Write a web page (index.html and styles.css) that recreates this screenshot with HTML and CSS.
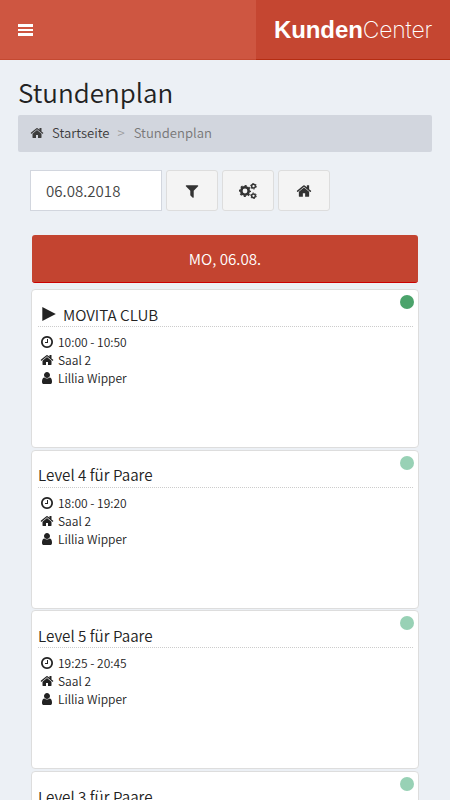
FILE: index.html
```html
<!DOCTYPE html>
<html lang="de">
<head>
<meta charset="utf-8">
<title>Stundenplan</title>
<link rel="stylesheet" href="styles.css">
</head>
<body>
<svg class="sprite" viewBox="0 0 1792 1792">
  <symbol id="home" viewBox="0 0 1792 1792"><path d="M1472 992v480q0 26-19 45t-45 19h-384v-384h-256v384h-384q-26 0-45-19t-19-45v-480q0-1 .5-3t.5-3l575-474 575 474q1 2 1 6zm223-69l-62 74q-8 9-21 11h-3q-13 0-21-7l-692-577-692 577q-12 8-24 7-13-2-21-11l-62-74q-8-10-7-23.500t11-21.500l719-599q32-26 76-26t76 26l244 204v-195q0-14 9-23t23-9h192q14 0 23 9t9 23v408l219 182q10 8 11 21.500t-7 23.500z"/></symbol>
  <symbol id="filter" viewBox="0 0 1792 1792"><path d="M1595 295q17 41-14 70l-493 493v742q0 42-39 59-13 5-25 5-27 0-45-19l-256-256q-19-19-19-45v-486l-493-493q-31-29-14-70 17-39 59-39h1280q42 0 59 39z"/></symbol>
  <symbol id="user" viewBox="0 0 1792 1792"><path d="M1536 1399q0 109-62.500 187t-150.500 78h-854q-88 0-150.500-78t-62.500-187q0-85 8.500-160.500t31.500-152 58.500-131 94-89 134.500-34.500q131 128 313 128t313-128q76 0 134.500 34.500t94 89 58.500 131 31.500 152 8.500 160.500zm-256-887q0 159-112.500 271.500t-271.500 112.500-271.500-112.500-112.500-271.500 112.500-271.500 271.500-112.500 271.500 112.500 112.500 271.500z"/></symbol>
  <symbol id="clock" viewBox="0 0 1792 1792"><path d="M1024 544v448q0 14-9 23t-23 9h-320q-14 0-23-9t-9-23v-64q0-14 9-23t23-9h224v-352q0-14 9-23t23-9h64q14 0 23 9t9 23zm416 352q0-148-73-273t-198-198-273-73-273 73-198 198-73 273 73 273 198 198 273 73 273-73 198-198 73-273zm224 0q0 209-103 385.500t-279.500 279.500-385.500 103-385.500-103-279.500-279.500-103-385.500 103-385.500 279.500-279.500 385.500-103 385.500 103 279.500 279.500 103 385.500z"/></symbol>
  <symbol id="cogs" viewBox="0 0 18 16">
    <g fill="none" stroke="currentColor">
      <circle cx="6" cy="8" r="3.700" stroke-width="2.600"/>
      <circle cx="6" cy="8" r="5.300" stroke-width="1.500" stroke-dasharray="2.081" stroke-dashoffset="1.040"/>
      <circle cx="14.500" cy="3.200" r="1.900" stroke-width="1.500"/>
      <circle cx="14.500" cy="3.200" r="2.850" stroke-width="1" stroke-dasharray="1.492"/>
      <circle cx="14.500" cy="12.800" r="1.900" stroke-width="1.500"/>
      <circle cx="14.500" cy="12.800" r="2.850" stroke-width="1" stroke-dasharray="1.492"/>
    </g>
  </symbol>
</svg>

<header class="topbar">
  <div class="menu"><span class="bars"><i></i><i></i><i></i></span></div>
  <div class="brand"><b>Kunden</b><span>Center</span></div>
</header>

<main class="content">
  <h1>Stundenplan</h1>
  <nav class="crumbs">
    <svg class="icon"><use href="#home"/></svg>
    <span class="crumb-home">Startseite</span>
    <span class="sep">&gt;</span>
    <span class="current">Stundenplan</span>
  </nav>
  <div class="tools">
    <div class="date">06.08.2018</div>
    <div class="btn"><svg class="icon"><use href="#filter"/></svg></div>
    <div class="btn"><svg class="icon cogs"><use href="#cogs"/></svg></div>
    <div class="btn"><svg class="icon"><use href="#home"/></svg></div>
  </div>
  <section class="day">
    <div class="day-head">MO, 06.08.</div>
    <article class="card">
      <span class="dot active"></span>
      <h2><svg class="play" viewBox="0 0 14 14"><path d="M.3 0 13.800 7 .3 14z"/></svg><span>MOVITA CLUB</span></h2>
      <div class="row"><svg class="icon"><use href="#clock"/></svg><span>10:00 - 10:50</span></div>
      <div class="row"><svg class="icon"><use href="#home"/></svg><span>Saal 2</span></div>
      <div class="row"><svg class="icon"><use href="#user"/></svg><span>Lillia Wipper</span></div>
    </article>
    <article class="card">
      <span class="dot"></span>
      <h2><span>Level 4 für Paare</span></h2>
      <div class="row"><svg class="icon"><use href="#clock"/></svg><span>18:00 - 19:20</span></div>
      <div class="row"><svg class="icon"><use href="#home"/></svg><span>Saal 2</span></div>
      <div class="row"><svg class="icon"><use href="#user"/></svg><span>Lillia Wipper</span></div>
    </article>
    <article class="card">
      <span class="dot"></span>
      <h2><span>Level 5 für Paare</span></h2>
      <div class="row"><svg class="icon"><use href="#clock"/></svg><span>19:25 - 20:45</span></div>
      <div class="row"><svg class="icon"><use href="#home"/></svg><span>Saal 2</span></div>
      <div class="row"><svg class="icon"><use href="#user"/></svg><span>Lillia Wipper</span></div>
    </article>
    <article class="card">
      <span class="dot"></span>
      <h2><span>Level 3 für Paare</span></h2>
    </article>
  </section>
</main>
</body>
</html>
```
FILE: styles.css
```css
* { box-sizing: border-box; }
html, body { height: 800px; overflow: hidden; }
body {
  margin: 0;
  background: #ecf0f5;
  color: #222;
  font-family: "Noto Sans CJK SC", "Open Sans", sans-serif;
  font-weight: 350;
}
.sprite { display: none; }
.icon { width: 14px; height: 14px; fill: currentColor; flex: none; }

.topbar { display: flex; height: 60px; }
.menu {
  width: 256px;
  padding: 24px 18px;
  background: #ce5641;
  border-bottom: 1px solid #c44931;
}
.bars { display: flex; flex-direction: column; justify-content: space-between; width: 15px; height: 12px; }
.bars i { height: 2.600px; background: #fff; }
.brand {
  flex: 1;
  display: flex;
  padding-left: 18px;
  background: #c54631;
  border-bottom: 1px solid #b52d12;
  color: #fff;
  font: 24px/60px "Liberation Sans", sans-serif;
  white-space: nowrap;
}
.brand b { letter-spacing: -.1px; }
.brand span { font-family: Inter, sans-serif; font-weight: 200; font-size: 23px; letter-spacing: -.2px; }

.content { padding: 0 18px; }
h1 { margin: 16px 0 0; height: 39px; font-size: 26px; line-height: 31px; font-weight: 350; }
.crumbs {
  display: flex;
  align-items: center;
  height: 37px;
  padding: 0 12px 1px;
  border-radius: 2px;
  background: #d2d6de;
  color: #3c3c3c;
  font-size: 13.100px;
  line-height: 20px;
}
.crumb-home { margin-left: 8px; }
.sep { margin: 0 9px 0 8px; color: #999; }
.current { color: #777; }

.tools { display: flex; gap: 4px; margin: 18px 12px 0; height: 41px; }
.date {
  width: 132px;
  padding-left: 15px;
  border: 1px solid #d2d6de;
  background: #fff;
  color: #444;
  font-size: 15.100px;
  line-height: 39px;
}
.btn {
  width: 52px;
  display: flex;
  align-items: center;
  justify-content: center;
  border: 1px solid #ddd;
  border-radius: 3px;
  background: #f4f4f4;
  color: #333;
}
.btn .icon { width: 16px; height: 16px; }
.btn .cogs { width: 18px; height: 16px; }

.day { margin: 24px 13px 0; }
.day-head {
  height: 48px;
  margin: 0 1px 6px;
  border-radius: 3px;
  background: #c34430;
  border-bottom: 1px solid #c00;
  color: #fff;
  font-size: 15.200px;
  line-height: 46px;
  text-align: center;
}
.card {
  position: relative;
  height: 159px;
  margin-bottom: 1.700px;
  padding: 14px 5px 0 6px;
  border: 1px solid #ddd;
  border-radius: 4px;
  background: #fff;
}
.dot {
  position: absolute;
  top: 5px;
  right: 4px;
  width: 14px;
  height: 14px;
  border-radius: 50%;
  background: #98d1b5;
}
.dot.active { background: #4ba36b; }
.card h2 {
  display: flex;
  align-items: center;
  height: 23px;
  margin: 0 0 6px;
  padding-bottom: 3px;
  border-bottom: 1px dotted #ccc;
  font-size: 15.200px;
  line-height: 18px;
  font-weight: 350;
}
.play { width: 14px; height: 14px; margin: 0 7px 0 4px; fill: #222; }
.row { display: flex; align-items: center; gap: 4px; height: 18px; padding-left: 2px; font-size: 12px; line-height: 18px; }
```
